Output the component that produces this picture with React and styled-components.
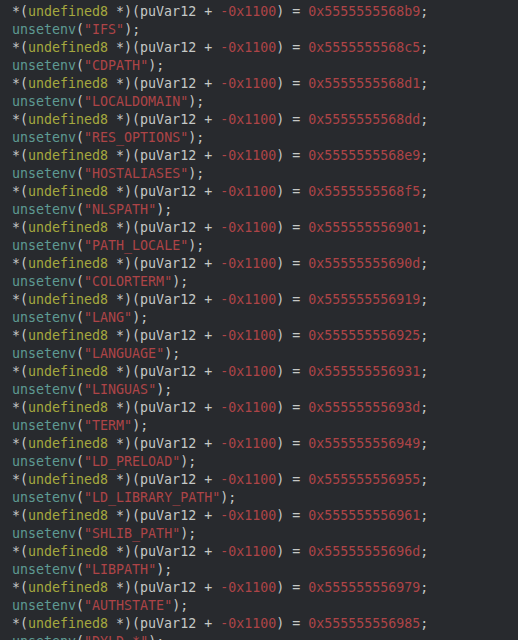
import React from "react";
import styled, { createGlobalStyle } from "styled-components";

const GlobalStyle = createGlobalStyle`
  html, body {
    margin: 0;
    padding: 0;
    background: #282a2e;
    overflow: hidden;
  }
`;

// address written before each unsetenv call
const pairs = [
  ["0x5555555568b9", "IFS"],
  ["0x5555555568c5", "CDPATH"],
  ["0x5555555568d1", "LOCALDOMAIN"],
  ["0x5555555568dd", "RES_OPTIONS"],
  ["0x5555555568e9", "HOSTALIASES"],
  ["0x5555555568f5", "NLSPATH"],
  ["0x555555556901", "PATH_LOCALE"],
  ["0x55555555690d", "COLORTERM"],
  ["0x555555556919", "LANG"],
  ["0x555555556925", "LANGUAGE"],
  ["0x555555556931", "LINGUAS"],
  ["0x55555555693d", "TERM"],
  ["0x555555556949", "LD_PRELOAD"],
  ["0x555555556955", "LD_LIBRARY_PATH"],
  ["0x555555556961", "SHLIB_PATH"],
  ["0x55555555696d", "LIBPATH"],
  ["0x555555556979", "AUTHSTATE"],
  ["0x555555556985", "DYLD_*"],
];

const Listing = styled.pre`
  margin: 0;
  padding: 3px 0 0 12px;
  height: 640px;
  box-sizing: border-box;
  background: #282a2e;
  color: #c5c8c6;
  font-family: "DejaVu Sans Mono", "Liberation Mono", monospace;
  font-size: 13.3px;
  line-height: 18px;
  white-space: pre;
`;

const Line = styled.div`
  height: 18px;
`;

const Token = styled.span`
  color: ${(p) =>
    p.$kind === "type"
      ? "#a5a83f"
      : p.$kind === "func"
      ? "#5e9a93"
      : p.$kind === "lit"
      ? "#ad4447"
      : "#c5c8c6"};
`;

const Assign = ({ addr }) => (
  <Line>
    *(<Token $kind="type">undefined8</Token> *)(puVar12 + <Token $kind="lit">-0x1100</Token>) ={" "}
    <Token $kind="lit">{addr}</Token>;
  </Line>
);

const Unset = ({ name }) => (
  <Line>
    <Token $kind="func">unsetenv</Token>(<Token $kind="lit">"{name}"</Token>);
  </Line>
);

export default function App() {
  return (
    <>
      <GlobalStyle />
      <Listing>
        {pairs.map(([addr, name]) => (
          <React.Fragment key={addr}>
            <Assign addr={addr} />
            <Unset name={name} />
          </React.Fragment>
        ))}
      </Listing>
    </>
  );
}
